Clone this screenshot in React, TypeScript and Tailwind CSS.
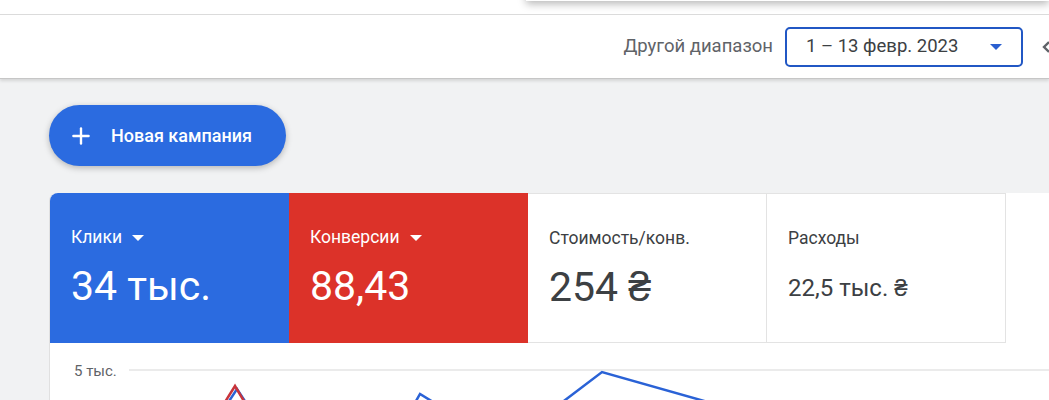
import { Plus } from "lucide-react";

function Caret({ className }: { className: string }) {
  return (
    <svg width="12" height="6" viewBox="0 0 12 6" className={className}>
      <path d="M0 0h12L6 6z" fill="currentColor" />
    </svg>
  );
}

type Tile = {
  label: string;
  value: string;
  caret?: boolean;
  tone: "blue" | "red" | "plain";
  small?: boolean;
};

const TILES: Tile[] = [
  { label: "Клики", value: "34 тыс.", caret: true, tone: "blue" },
  { label: "Конверсии", value: "88,43", caret: true, tone: "red" },
  { label: "Стоимость/конв.", value: "254 ₴", tone: "plain" },
  { label: "Расходы", value: "22,5 тыс. ₴", tone: "plain", small: true },
];

function MetricTile({ tile }: { tile: Tile }) {
  const tone =
    tile.tone === "blue"
      ? "bg-[#2b6be0] text-white rounded-tl-lg"
      : tile.tone === "red"
        ? "bg-[#dc3229] text-white"
        : "bg-white text-[#3c4043] border-t border-r border-b border-[#e3e3e3]";
  return (
    <div className={`w-[239px] h-[150px] shrink-0 pl-[21px] pt-[32px] ${tone}`}>
      <div className="flex items-center gap-[10px] text-[17.5px] leading-6">
        <span>{tile.label}</span>
        {tile.caret && <Caret className="text-white mt-px" />}
      </div>
      {tile.small ? (
        <div className="mt-[26px] text-[24px] leading-none">{tile.value}</div>
      ) : (
        <div className="mt-[17px] text-[41px] leading-none">{tile.value}</div>
      )}
    </div>
  );
}

export default function App() {
  return (
    <div className="w-[1049px] h-[400px] overflow-hidden bg-[#f1f2f3] font-['Roboto',sans-serif]">
      {/* strip under a floating panel */}
      <div className="relative h-[15px] bg-white border-b border-[#dcdcdc]">
        <div className="absolute left-[526px] right-0 -top-[40px] h-[41px] bg-white shadow-[0_3px_8px_rgba(0,0,0,0.28)]" />
      </div>

      {/* toolbar */}
      <div className="relative z-10 flex h-[64px] items-center justify-end bg-white border-b border-[#c6c6c6] shadow-[0_2px_3px_rgba(0,0,0,0.12)]">
        <span className="text-[18.5px] text-[#5f6368]">Другой диапазон</span>
        <button className="ml-[12px] flex h-[40px] w-[238px] items-center justify-between rounded-[5px] border-2 border-[#2157c4] pl-[19px] pr-[19px] text-[18.5px] text-[#3c4043]">
          <span>1 – 13 февр. 2023</span>
          <Caret className="text-[#2a5fd0]" />
        </button>
        <div className="ml-[14px] w-[12px] overflow-hidden">
          <svg width="24" height="24" viewBox="0 0 24 24" className="text-[#5f6368]">
            <path d="M12 7l-5 5 5 5" fill="none" stroke="currentColor" strokeWidth="2.4" />
          </svg>
        </div>
      </div>

      <div className="pl-[49px] pt-[26px]">
        <button className="flex h-[61px] w-[237px] items-center rounded-full bg-[#2b6be0] pl-[19px] text-white shadow-[0_2px_6px_rgba(0,0,0,0.25)]">
          <Plus size={26} strokeWidth={2.2} />
          <span className="ml-[17px] text-[18px] font-medium">Новая кампания</span>
        </button>
      </div>

      {/* metrics card */}
      <div className="ml-[49px] mt-[27px] rounded-tl-lg border-l border-[#e0e0e0] bg-white">
        <div className="flex">
          {TILES.map((t) => (
            <MetricTile key={t.label} tile={t} />
          ))}
        </div>
        <div className="relative h-[80px]">
          <span className="absolute left-[24px] top-[17px] text-[15px] text-[#5f6368]">5 тыс.</span>
          <svg width="1000" height="80" className="block">
            <line x1="79" y1="27" x2="1000" y2="27" stroke="#e4e4e4" strokeWidth="1.5" />
            <polyline points="168,75 187,46 206,75" fill="none" stroke="#2a62d6" strokeWidth="2.5" />
            <polyline points="165,75 185,43 204,75" fill="none" stroke="#c8343b" strokeWidth="2.5" />
            <polyline points="358,72 370,51 388,62" fill="none" stroke="#2a62d6" strokeWidth="2.5" />
            <polyline points="502,67 552,29 700,71" fill="none" stroke="#2a62d6" strokeWidth="2.5" />
          </svg>
        </div>
      </div>
    </div>
  );
}
